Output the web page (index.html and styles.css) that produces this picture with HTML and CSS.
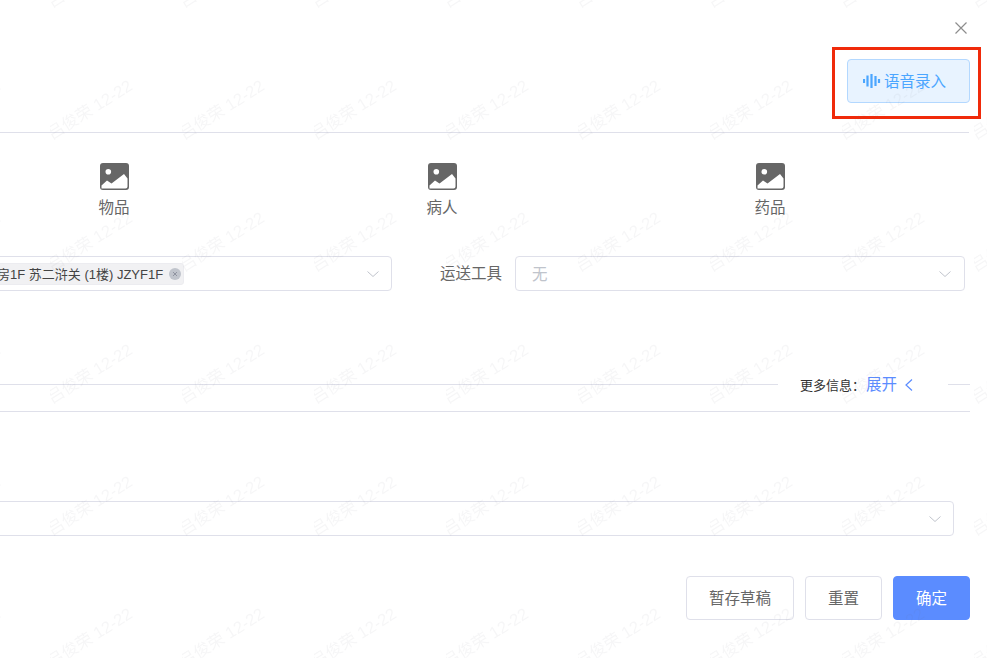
FILE: index.html
```html
<!DOCTYPE html>
<html lang="zh-CN">
<head>
<meta charset="utf-8">
<title>语音录入</title>
<link rel="stylesheet" href="styles.css">
</head>
<body>
<div class="page">
  <div class="close-row">
    <svg class="close" viewBox="0 0 12 12" width="12" height="12"><path d="M0.5 0.5L11.5 11.5M11.5 0.5L0.5 11.5"/></svg>
  </div>
  <div class="voice-row">
    <button class="voice-btn">
      <svg class="voice-icon" viewBox="0 0 18 16" width="18" height="16"><path d="M1 6v4M4.500 2.500v11M8.500 1v14M12.500 3v10M16 6v4"/></svg>
      <span>语音录入</span>
    </button>
  </div>
  <div class="rule rule-top"></div>
  <div class="types">
    <div class="type">
      <svg class="pic" viewBox="0 0 29 27" width="29" height="27"><rect width="29" height="27" rx="3"/><circle class="pic-w" cx="8.300" cy="8.700" r="2.800"/><path class="pic-w" d="M1.500 25.500V22.500L7 17.500L11.500 20.500L24 11L27.500 15.500V23.500Q27.500 25.500 25.500 25.500Z"/></svg>
      <span class="type-label">物品</span>
    </div>
    <div class="type">
      <svg class="pic" viewBox="0 0 29 27" width="29" height="27"><rect width="29" height="27" rx="3"/><circle class="pic-w" cx="8.300" cy="8.700" r="2.800"/><path class="pic-w" d="M1.500 25.500V22.500L7 17.500L11.500 20.500L24 11L27.500 15.500V23.500Q27.500 25.500 25.500 25.500Z"/></svg>
      <span class="type-label">病人</span>
    </div>
    <div class="type">
      <svg class="pic" viewBox="0 0 29 27" width="29" height="27"><rect width="29" height="27" rx="3"/><circle class="pic-w" cx="8.300" cy="8.700" r="2.800"/><path class="pic-w" d="M1.500 25.500V22.500L7 17.500L11.500 20.500L24 11L27.500 15.500V23.500Q27.500 25.500 25.500 25.500Z"/></svg>
      <span class="type-label">药品</span>
    </div>
  </div>
  <div class="form-row">
    <div class="select select-dest">
      <span class="tag">药房1F 苏二浒关 (1楼) JZYF1F<i class="tag-x"><svg viewBox="0 0 12 12" width="12" height="12"><path d="M4 4L8 8M8 4L4 8"/></svg></i></span>
      <svg class="chev" viewBox="0 0 12 6" width="12" height="6"><path d="M0.500 0.500L6 5.500L11.500 0.500"/></svg>
    </div>
    <label class="field-label">运送工具</label>
    <div class="select select-tool">
      <span class="placeholder">无</span>
      <svg class="chev" viewBox="0 0 12 6" width="12" height="6"><path d="M0.500 0.500L6 5.500L11.500 0.500"/></svg>
    </div>
  </div>
  <div class="more-row">
    <div class="more-line more-line-l"></div>
    <span class="more-label">更多信息：</span>
    <span class="more-link">展开</span>
    <svg class="more-chev" viewBox="0 0 8 12" width="8" height="12"><path d="M7 0.500L1 6L7 11.500"/></svg>
    <div class="more-line more-line-r"></div>
  </div>
  <div class="rule rule-mid"></div>
  <div class="select select-wide">
    <svg class="chev" viewBox="0 0 12 6" width="12" height="6"><path d="M0.500 0.500L6 5.500L11.500 0.500"/></svg>
  </div>
  <div class="actions">
    <button class="btn btn-draft">暂存草稿</button>
    <button class="btn btn-reset">重置</button>
    <button class="btn btn-primary">确定</button>
  </div>
  <svg class="watermark" width="987" height="658">
    <defs>
      <pattern id="wm" x="50" y="60" width="132" height="132" patternUnits="userSpaceOnUse">
        <text class="wm-text" x="2" y="80" transform="rotate(-32 2 80)">吕俊荣 12-22</text>
      </pattern>
    </defs>
    <rect width="987" height="658" fill="url(#wm)"/>
  </svg>
</div>
</body>
</html>
```
FILE: styles.css
```css
* { box-sizing: border-box; }
html, body { margin: 0; padding: 0; background: #fff; }
body { font-family: "Liberation Sans", "Noto Sans CJK SC", sans-serif; color: #666; }
.page { position: relative; width: 987px; height: 658px; overflow: hidden; background: #fff; }

.close-row { display: flex; justify-content: flex-end; padding: 22px 20px 0 0; height: 34px; }
.close { display: block; }
.close path { fill: none; stroke: #8d8d8d; stroke-width: 1.2; }

.voice-row { display: flex; justify-content: flex-end; padding-right: 17px; margin-top: 25px; }
.voice-btn { position: relative; display: flex; align-items: center; width: 123px; height: 44px; padding: 0 0 2px 15px; gap: 3px; background: #e8f3ff; border: 1px solid #b3d8ff; border-radius: 4px; color: #4ba6ff; font: inherit; font-size: 15.500px; }
.voice-btn::after { content: ""; position: absolute; top: -13px; left: -16px; right: -12px; bottom: -17px; border: 3px solid #f02a0a; }
.voice-icon { display: block; flex: none; margin-top: 2px; }
.voice-icon path { fill: none; stroke: #4ba6ff; stroke-width: 2.200; }

.rule { height: 1px; background: #dfe0ea; }
.rule-top { width: 969px; margin-top: 29px; }
.rule-mid { width: 970px; margin-top: 16px; }

.types { display: flex; margin: 30px 0 0 -50px; }
.type { display: flex; flex-direction: column; align-items: center; width: 328px; }
.pic { display: block; fill: #666; }
.pic-w { fill: #fff; }
.type-label { margin-top: 7px; font-size: 15.500px; line-height: 22px; margin-bottom: -1px; }

.form-row { display: flex; align-items: center; margin: 38px 0 0 -60px; }
.select { display: flex; align-items: center; justify-content: space-between; height: 35px; border: 1px solid #dfe0ea; border-radius: 4px; background: #fff; }
.chev { display: block; flex: none; }
.chev path { fill: none; stroke: #c0c4cc; stroke-width: 1; }
.select-dest { flex: none; width: 452px; padding: 0 12px 0 0; }
.tag { display: flex; align-items: center; height: 22px; margin-left: 34px; padding: 0 2px 0 8px; background: #f1f1f3; border: 1px solid #ececf0; border-radius: 3px; font-size: 13px; color: #444; white-space: nowrap; }
.tag-x { display: block; width: 12px; height: 12px; margin-left: 6px; border-radius: 50%; background: #c0c4cc; font-style: normal; }
.tag-x svg { display: block; }
.tag-x path { fill: none; stroke: #8f93a0; stroke-width: 1; }
.field-label { flex: none; width: 123px; padding: 0 13px 3px 0; font-size: 15.500px; text-align: right; }
.select-tool { flex: none; width: 450px; padding: 0 13px 0 16px; }
.placeholder { padding-bottom: 1px; font-size: 15.500px; color: #c0c4cc; }

.more-row { display: flex; align-items: center; height: 21px; margin-top: 83px; }
.more-line { height: 1px; background: #dfe0ea; }
.more-line-l { flex: none; width: 778px; margin-right: 22px; }
.more-line-r { flex: none; width: 22px; margin-left: 35px; }
.more-label { flex: none; width: 66px; padding-bottom: 1px; font-size: 13px; color: #333; white-space: nowrap; }
.more-link { flex: none; padding-bottom: 3px; font-size: 15.500px; color: #5b8cff; }
.more-chev { display: block; flex: none; margin-left: 8px; }
.more-chev path { fill: none; stroke: #5b8cff; stroke-width: 1.2; }

.select-wide { width: 1014px; margin: 89px 0 0 -60px; padding-right: 12px; justify-content: flex-end; }

.actions { display: flex; justify-content: flex-end; gap: 11px; margin-top: 40px; padding-right: 17px; }
.btn { height: 44px; border: 1px solid #dfe0ea; border-radius: 4px; background: #fff; color: #666; font: inherit; font-size: 15.500px; padding: 0 0 2px; }
.btn-draft { width: 108px; }
.btn-reset { width: 77px; }
.btn-primary { width: 77px; background: #5b8cff; border-color: #5b8cff; color: #fff; }

.watermark { position: absolute; top: 0; left: 0; pointer-events: none; }
.wm-text { font-size: 16.500px; fill: rgba(90, 90, 110, .055); }
```
